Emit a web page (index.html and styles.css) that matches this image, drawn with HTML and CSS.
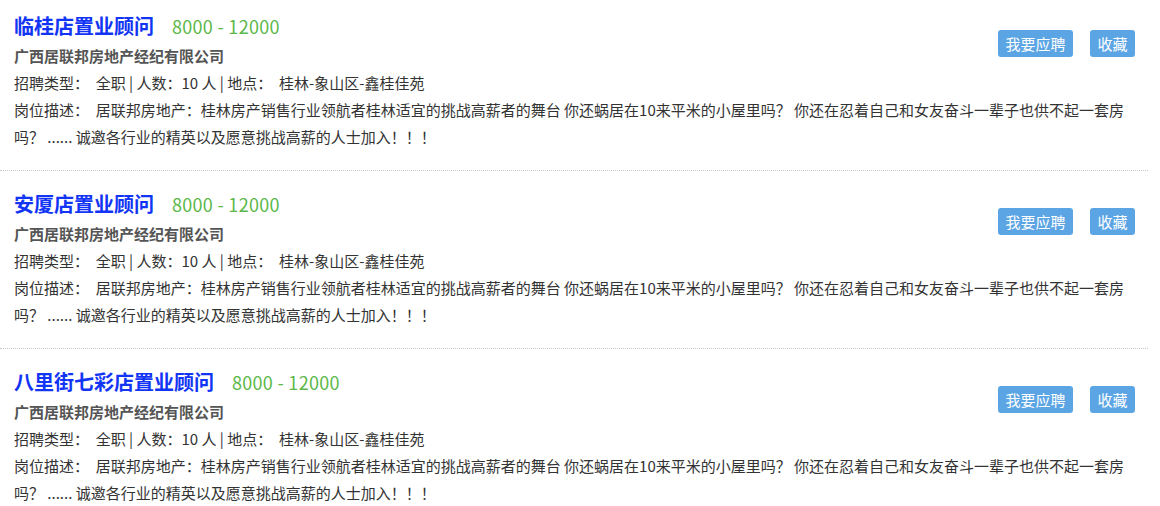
FILE: index.html
```html
<!DOCTYPE html>
<html lang="zh-CN">
<head>
<meta charset="utf-8">
<title>职位列表</title>
<link rel="stylesheet" href="styles.css">
</head>
<body>
<div class="job-list">
  <div class="job">
    <div class="job-head"><span class="job-title">临桂店置业顾问</span><span class="salary">8000 - 12000</span></div>
    <div class="company">广西居联邦房地产经纪有限公司</div>
    <div class="meta">招聘类型：&nbsp; 全职 | 人数：10 人 | 地点：&nbsp; 桂林-象山区-鑫桂佳苑</div>
    <div class="desc">岗位描述：&nbsp; 居联邦房地产：桂林房产销售行业领航者桂林适宜的挑战高薪者的舞台 你还蜗居在10来平米的小屋里吗？ 你还在忍着自己和女友奋斗一辈子也供不起一套房吗？ ...... 诚邀各行业的精英以及愿意挑战高薪的人士加入！！！</div>
    <div class="actions"><a class="btn">我要应聘</a><a class="btn">收藏</a></div>
  </div>
  <div class="job">
    <div class="job-head"><span class="job-title">安厦店置业顾问</span><span class="salary">8000 - 12000</span></div>
    <div class="company">广西居联邦房地产经纪有限公司</div>
    <div class="meta">招聘类型：&nbsp; 全职 | 人数：10 人 | 地点：&nbsp; 桂林-象山区-鑫桂佳苑</div>
    <div class="desc">岗位描述：&nbsp; 居联邦房地产：桂林房产销售行业领航者桂林适宜的挑战高薪者的舞台 你还蜗居在10来平米的小屋里吗？ 你还在忍着自己和女友奋斗一辈子也供不起一套房吗？ ...... 诚邀各行业的精英以及愿意挑战高薪的人士加入！！！</div>
    <div class="actions"><a class="btn">我要应聘</a><a class="btn">收藏</a></div>
  </div>
  <div class="job">
    <div class="job-head"><span class="job-title">八里街七彩店置业顾问</span><span class="salary">8000 - 12000</span></div>
    <div class="company">广西居联邦房地产经纪有限公司</div>
    <div class="meta">招聘类型：&nbsp; 全职 | 人数：10 人 | 地点：&nbsp; 桂林-象山区-鑫桂佳苑</div>
    <div class="desc">岗位描述：&nbsp; 居联邦房地产：桂林房产销售行业领航者桂林适宜的挑战高薪者的舞台 你还蜗居在10来平米的小屋里吗？ 你还在忍着自己和女友奋斗一辈子也供不起一套房吗？ ...... 诚邀各行业的精英以及愿意挑战高薪的人士加入！！！</div>
    <div class="actions"><a class="btn">我要应聘</a><a class="btn">收藏</a></div>
  </div>
</div>
</body>
</html>
```
FILE: styles.css
```css
html, body {
  margin: 0;
  padding: 0;
  background: #fff;
}
body {
  font-family: "Noto Sans CJK SC", "Noto Sans", sans-serif;
  font-size: 15px;
  color: #333;
}
.job-list {
  width: 1148px;
}
.job {
  display: grid;
  grid-template-columns: 1fr auto;
  grid-template-rows: 32px 27px 27px auto;
  padding: 17px 13px 20px 14px;
  border-bottom: 1px dotted #c8c8c8;
}
.job:first-child {
  padding-top: 10px;
}
.job-head {
  grid-column: 1;
  grid-row: 1;
  line-height: 32px;
  display: flex;
  align-items: baseline;
}
.job-title {
  font-size: 20px;
  font-weight: bold;
  color: #1235f5;
}
.salary {
  margin-left: 18px;
  font-size: 18px;
  letter-spacing: 0.3px;
  color: #5cb84a;
}
.company {
  grid-column: 1;
  grid-row: 2;
  line-height: 27px;
  font-weight: bold;
  color: #555;
}
.meta {
  grid-column: 1;
  grid-row: 3;
  line-height: 27px;
}
.desc {
  grid-column: 1 / -1;
  grid-row: 4;
  line-height: 27px;
  padding-right: 5px;
}
.actions {
  grid-column: 2;
  grid-row: 1 / span 2;
  align-self: start;
  display: flex;
  gap: 17px;
  margin-top: 20px;
}
.btn {
  display: block;
  height: 27px;
  line-height: 27px;
  padding: 0 7.5px;
  border-radius: 3px;
  background: #5ca5e4;
  color: #fff;
  font-size: 15px;
  cursor: pointer;
}
```
